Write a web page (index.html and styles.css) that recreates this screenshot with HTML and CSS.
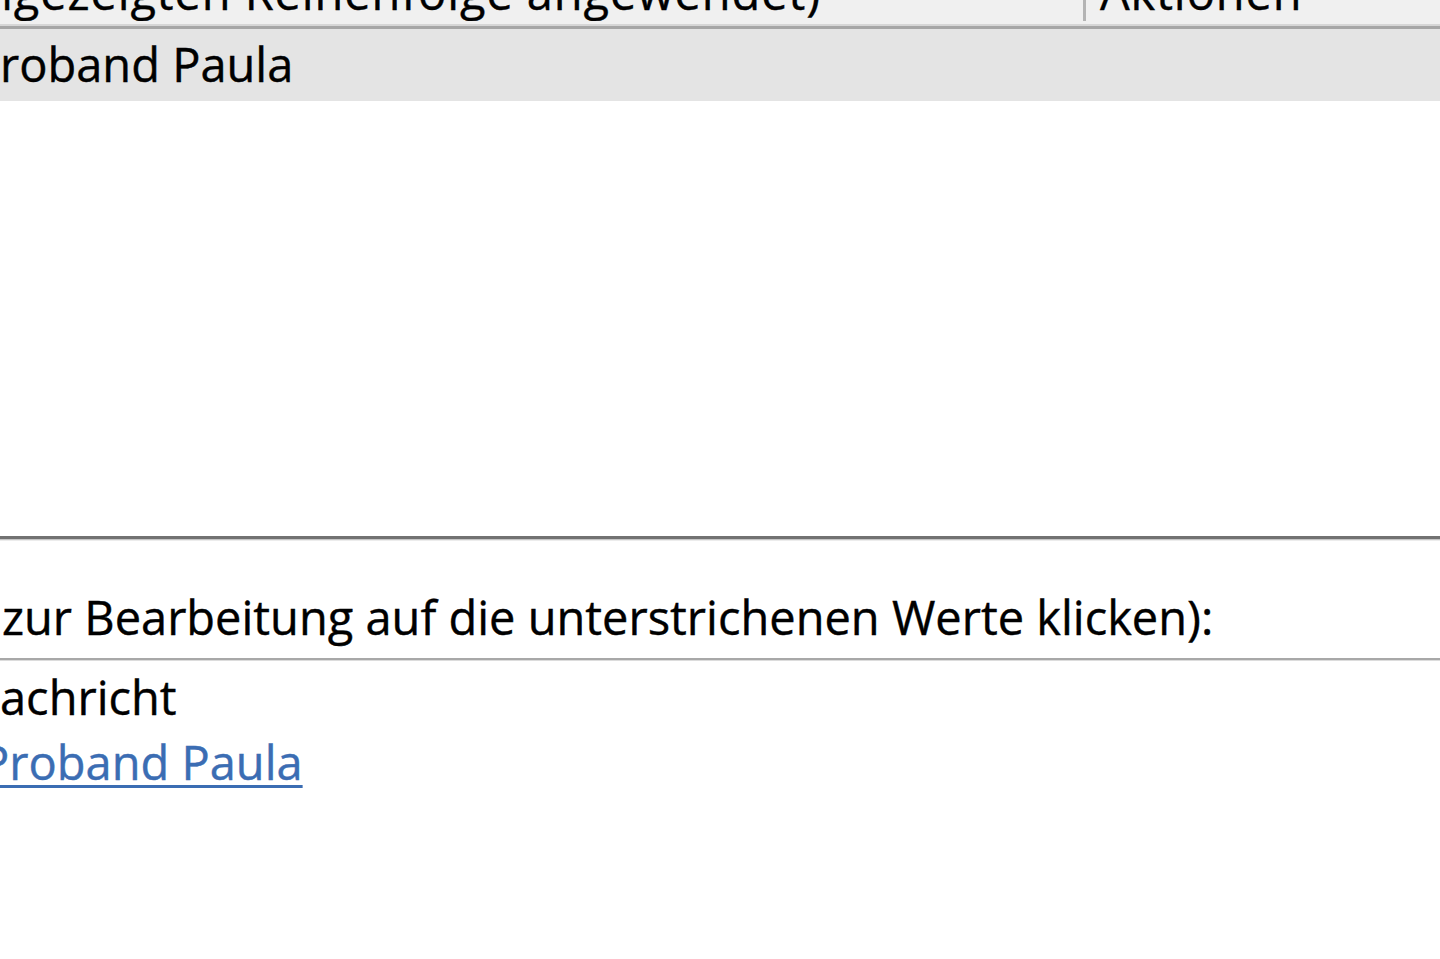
FILE: index.html
```html
<!DOCTYPE html>
<html lang="de">
<head>
<meta charset="utf-8">
<title>Regeln und Benachrichtigungen</title>
<link rel="stylesheet" href="styles.css">
</head>
<body>
<div class="dialog">
  <div class="list">
    <div class="list-header">
      <div class="col col-rule"><span class="hdr-text hdr-rule">angezeigten Reihenfolge angewendet)</span></div>
      <div class="col col-actions"><span class="hdr-text">Aktionen</span></div>
    </div>
    <div class="list-body">
      <div class="row selected"><span class="row-text">roband Paula</span></div>
    </div>
  </div>
  <div class="desc-label">zur Bearbeitung auf die unterstrichenen Werte klicken):</div>
  <div class="desc">
    <div class="desc-line">achricht</div>
    <div class="desc-line"><a class="link" href="#">Proband Paula</a></div>
  </div>
</div>
</body>
</html>
```

FILE: styles.css
```css
html, body {
  margin: 0;
  padding: 0;
  background: #ffffff;
}
body {
  width: 1440px;
  height: 959px;
  overflow: hidden;
  font-family: "Open Sans", "Noto Sans", sans-serif;
  font-size: 47px;
  color: #000000;
  -webkit-text-stroke: 0.4px currentColor;
}
.dialog {
  display: flex;
  flex-direction: column;
}
.list {
  display: flex;
  flex-direction: column;
  border-bottom: 3px solid #727272;
  box-shadow: 0 1px 0 #c6c6c6, 0 2px 0 #ececec;
}
.list-header {
  display: flex;
  height: 26px;
  background: #f0f0f0;
  border-bottom: 3px solid #a6a6a6;
  box-shadow: inset 0 -2px 0 #d6d6d6;
  overflow: hidden;
}
.col {
  display: flex;
  align-items: flex-start;
  overflow: hidden;
}
.col-rule {
  width: 1086px;
  box-sizing: border-box;
  border-right: 3px solid #b4b4b4;
  height: 21px;
}
.col-actions {
  flex: 1;
  padding-left: 14px;
}
.hdr-text {
  line-height: 60px;
  margin-top: -38px;
  letter-spacing: 0.9px;
  white-space: nowrap;
}
.hdr-rule {
  margin-left: -43px;
}
.list-body {
  height: 507px;
  display: flex;
  flex-direction: column;
}
.row {
  height: 72px;
  line-height: 70px;
  white-space: nowrap;
}
.row.selected {
  background: #e4e4e4;
}
.desc-label {
  margin-top: 48px;
  line-height: 60px;
  padding-left: 2px;
  white-space: nowrap;
  padding-bottom: 11px;
  border-bottom: 2px solid #a8a8a8;
  box-shadow: 0 1px 0 #dcdcdc;
}
.desc {
  display: flex;
  flex-direction: column;
  padding-top: 5px;
}
.desc-line {
  line-height: 65px;
  white-space: nowrap;
}
.link {
  color: #3b6db3;
  text-decoration: underline;
  text-decoration-thickness: 3px;
  text-underline-offset: 5px;
  margin-left: -19px;
}
```
